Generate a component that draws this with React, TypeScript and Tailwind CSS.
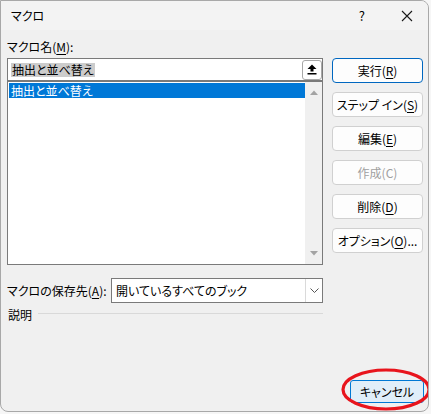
import React from 'react';

const font = "font-['Noto_Sans_CJK_JP','Noto_Sans',sans-serif] [font-feature-settings:'palt']";

const Btn: React.FC<{ children: React.ReactNode; primary?: boolean; disabled?: boolean }> = ({ children, primary, disabled }) => (
  <div
    className={
      'h-[25px] w-full rounded-[4px] border flex items-center justify-center text-[12px] leading-none ' +
      (primary ? 'border-[#0067c0] bg-[#fdfdfd] ' : 'border-[#d0d0d0] bg-[#fdfdfd] ') +
      (disabled ? 'text-[#a0a0a0]' : 'text-black')
    }
  >
    {children}
  </div>
);

const U: React.FC<{ children: React.ReactNode }> = ({ children }) => (
  <span className="underline underline-offset-[2px] decoration-[1px]">{children}</span>
);

export default function App() {
  return (
    <div className={`w-[431px] h-[414px] bg-[#f6f6f6] ${font}`}>
      <div className="relative w-[429px] h-[412px] bg-[#f0f0f0] border border-[#a8a8a8] rounded-[8px] rounded-tl-none flex flex-col overflow-hidden">
        {/* title bar */}
        <div className="h-[29px] bg-[#f3f3f3] flex items-center text-[12px] text-black">
          <span className="pl-[10px] pt-[1px]">マクロ</span>
          <span className="ml-auto mr-[36px] text-[13px]">?</span>
          <svg width="12" height="12" viewBox="0 0 12 12" className="mr-[15px]">
            <path d="M1 1 L11 11 M11 1 L1 11" stroke="#1a1a1a" strokeWidth="1.1" />
          </svg>
        </div>

        <div className="flex-1 flex flex-col pl-[6px] pr-[4px]">
          <div className="flex gap-[9px]">
            {/* left column */}
            <div className="w-[316px] flex flex-col">
              <div className="h-[28px] pt-[10px] text-[12px] leading-[14px] text-black">
                マクロ名(<U>M</U>):
              </div>
              <div className="h-[23px] bg-white border border-[#7a7a7a] flex items-center pl-[3px]">
                <span className="bg-[#cccccc] text-black text-[12px] leading-[14px] px-[1px]">抽出と並べ替え</span>
                <div className="ml-auto w-[20px] h-[20px] bg-white border border-[#a8a8a8] rounded-[3px] flex items-center justify-center">
                  <svg width="10" height="11" viewBox="0 0 10 11">
                    <path d="M5 0.5 L9.5 5 L6.5 5 L6.5 7.5 L3.5 7.5 L3.5 5 L0.5 5 Z" fill="#000" />
                    <rect x="0.5" y="9" width="9" height="1.5" fill="#000" />
                  </svg>
                </div>
              </div>
              <div className="h-[184px] bg-white border border-[#7a7a7a] flex">
                <div className="flex-1 pl-[1px] pt-[1px]">
                  <div className="h-[15px] bg-[#0078d7] text-white text-[12px] leading-[15px] pl-[2px]">抽出と並べ替え</div>
                </div>
                <div className="w-[17px] bg-[#f0f0f0] flex flex-col items-center justify-between pt-[8px] pb-[8px]">
                  <svg width="8" height="5" viewBox="0 0 8 5">
                    <path d="M0 5 L4 0.5 L8 5 Z" fill="#a3a3a3" />
                  </svg>
                  <svg width="8" height="5" viewBox="0 0 8 5">
                    <path d="M0 0 L4 4.5 L8 0 Z" fill="#a3a3a3" />
                  </svg>
                </div>
              </div>

              <div className="mt-[13px] flex items-center h-[25px]">
                <div className="w-[104px] text-[12px] leading-[14px] text-black">
                  マクロの保存先(<U>A</U>):
                </div>
                <div className="w-[212px] h-[25px] bg-white border border-[#7a7a7a] flex items-center">
                  <span className="pl-[4px] text-[12px] text-black">開いているすべてのブック</span>
                  <div className="ml-auto w-[17px] h-full border-l border-[#dadada] flex items-center justify-center">
                    <svg width="9" height="5" viewBox="0 0 9 5">
                      <path d="M0.5 0.5 L4.5 4.5 L8.5 0.5" stroke="#555" strokeWidth="1" fill="none" />
                    </svg>
                  </div>
                </div>
              </div>

              <div className="mt-[3px] flex items-center h-[18px]">
                <span className="text-[12px] leading-[14px] text-black pl-[1px]">説明</span>
                <div className="flex-1 ml-[6px] mb-[4px] h-px bg-[#d9d9d9]" />
              </div>
            </div>

            {/* right column */}
            <div className="w-[91px] pt-[28px] flex flex-col gap-[9px]">
              <Btn primary>実行(<U>R</U>)</Btn>
              <Btn>ステップ イン(<U>S</U>)</Btn>
              <Btn>編集(<U>E</U>)</Btn>
              <Btn disabled>作成(C)</Btn>
              <Btn>削除(<U>D</U>)</Btn>
              <Btn>オプション(<U>O</U>)...</Btn>
            </div>
          </div>

          <div className="mt-auto pb-[8px] flex justify-end">
            <div className="relative">
              <div className="w-[74px] h-[23px] rounded-[3px] border border-[#0078d4] bg-[#e0eef9] flex items-center justify-center text-[12px] text-black">
                キャンセル
              </div>
              <svg
                width="90"
                height="44"
                viewBox="0 0 90 44"
                className="absolute left-[-9px] top-[-12px] pointer-events-none"
              >
                <ellipse cx="45" cy="21.5" rx="43" ry="19.5" stroke="#e8141c" strokeWidth="3.2" fill="none" />
              </svg>
            </div>
          </div>
        </div>
      </div>
    </div>
  );
}
